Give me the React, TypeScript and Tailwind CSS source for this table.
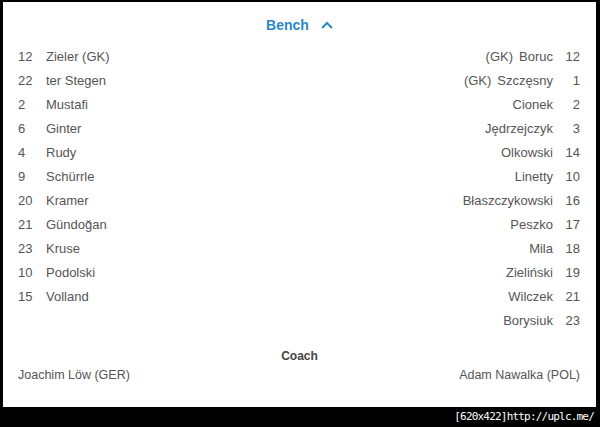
const home = [
  { num: "12", name: "Zieler (GK)" },
  { num: "22", name: "ter Stegen" },
  { num: "2", name: "Mustafi" },
  { num: "6", name: "Ginter" },
  { num: "4", name: "Rudy" },
  { num: "9", name: "Schürrle" },
  { num: "20", name: "Kramer" },
  { num: "21", name: "Gündoğan" },
  { num: "23", name: "Kruse" },
  { num: "10", name: "Podolski" },
  { num: "15", name: "Volland" },
];

const away = [
  { num: "12", name: "Boruc", gk: true },
  { num: "1", name: "Szczęsny", gk: true },
  { num: "2", name: "Cionek" },
  { num: "3", name: "Jędrzejczyk" },
  { num: "14", name: "Olkowski" },
  { num: "10", name: "Linetty" },
  { num: "16", name: "Błaszczykowski" },
  { num: "17", name: "Peszko" },
  { num: "18", name: "Mila" },
  { num: "19", name: "Zieliński" },
  { num: "21", name: "Wilczek" },
  { num: "23", name: "Borysiuk" },
];

export default function App() {
  return (
    <div
      className="w-[600px] h-[427px] bg-black flex flex-col pt-[2px] pl-[3px] pr-[4px] overflow-hidden"
      style={{ fontFamily: '"Liberation Sans", Arial, sans-serif' }}
    >
      {/* Panel */}
      <div className="h-[405px] bg-white flex flex-col text-[13px] text-[#555]">
        {/* Header */}
        <div className="mt-[11px] h-[24px] flex items-center justify-center gap-[12px] text-[#2b88c6]">
          <span className="text-[14px] font-bold">Bench</span>
          <svg width="12" height="8" viewBox="0 0 12 8" fill="none">
            <polyline points="1,7 6,2 11,7" stroke="#2b88c6" strokeWidth="2" />
          </svg>
        </div>

        {/* Lineups */}
        <div className="mt-[8px] flex justify-between pl-[15px] pr-[16px]">
          <div className="flex flex-col">
            {home.map((p) => (
              <div key={p.num} className="h-[24px] flex items-center">
                <span className="w-[28px]">{p.num}</span>
                <span>{p.name}</span>
              </div>
            ))}
          </div>
          <div className="flex flex-col">
            {away.map((p) => (
              <div key={p.num + p.name} className="h-[24px] flex items-center justify-end">
                {p.gk && <span className="mr-[6px]">(GK)</span>}
                <span>{p.name}</span>
                <span className="w-[27px] text-right">{p.num}</span>
              </div>
            ))}
          </div>
        </div>

        {/* Coach */}
        <div className="mt-[13px] h-[20px] flex items-center justify-center text-[12px] font-bold text-[#444]">
          Coach
        </div>
        <div className="h-[18px] flex items-center justify-between pl-[15px] pr-[16px] text-[12.5px]">
          <span>Joachim Löw (GER)</span>
          <span>Adam Nawalka (POL)</span>
        </div>
      </div>

      {/* Watermark bar */}
      <div className="h-[20px] flex items-center justify-end pr-[2px]">
        <span
          className="text-white text-[11px] tracking-[-0.8px]"
          style={{ fontFamily: '"DejaVu Sans Mono", monospace' }}
        >
          [620x422]http://uplc.me/
        </span>
      </div>
    </div>
  );
}
